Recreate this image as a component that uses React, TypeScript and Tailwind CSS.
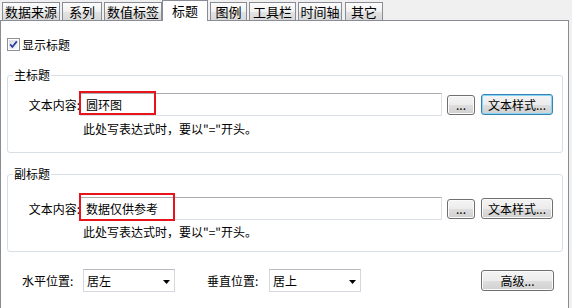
import React from "react";

const tabs = [
  { label: "数据来源", cls: "ml-[2px] w-[58px]" },
  { label: "系列", cls: "ml-[2px] w-[40px]" },
  { label: "数值标签", cls: "ml-[2px] w-[58px]" },
  { label: "标题", cls: "ml-0 w-[46px]", sel: true },
  { label: "图例", cls: "ml-[2px] w-[37px]" },
  { label: "工具栏", cls: "ml-[2px] w-[47px]" },
  { label: "时间轴", cls: "ml-[2px] w-[44px]" },
  { label: "其它", cls: "ml-[3px] w-[38px]" },
];

function Btn({ cls, focus, children }: { cls: string; focus?: boolean; children: React.ReactNode }) {
  return (
    <div
      className={
        "flex items-center justify-center rounded-[3px] border bg-[linear-gradient(to_bottom,#f4f4f4_0%,#ececec_50%,#dedede_51%,#d0d0d0_100%)] text-[12px] leading-[14px] text-black " +
        (focus
          ? "border-[#3c7fb1] shadow-[inset_0_0_0_1px_#7fd6f7]"
          : "border-[#707070] shadow-[inset_0_0_0_1px_#fbfbfb]") +
        " " +
        cls
      }
    >
      {children}
    </div>
  );
}

function Group({
  title,
  cls,
  value,
  redCls,
  padCls,
  hintCls,
  focus,
}: {
  title: string;
  cls: string;
  value: string;
  redCls: string;
  padCls: string;
  hintCls: string;
  focus?: boolean;
}) {
  return (
    <div className={"relative ml-[6px] h-[78px] w-[556px] rounded-[3px] border border-[#d5dfe5] " + cls}>
      <span className="absolute left-[5px] top-[-8px] bg-white px-[1px] text-[12px] leading-[14px]">{title}</span>
      <div className={"flex items-center " + padCls}>
        <div className="w-[72px] text-right text-[12px] leading-[14px]">文本内容:</div>
        <div className="relative flex h-[23px] w-[362px] items-center border border-[#dbdfe6] border-t-[#abadb3] bg-white pl-[5px] text-[12px] leading-[14px]">
          {value}
          <div className={"absolute border-2 border-[#e8141b] " + redCls}></div>
        </div>
        <Btn cls="ml-[5px] h-[20px] w-[28px] text-[#1c1c8c]">...</Btn>
        <Btn cls="ml-[6px] h-[21px] w-[72px]" focus={focus}>
          文本样式...
        </Btn>
      </div>
      <div className={"pl-[75px] text-[12px] leading-[14px] " + hintCls}>此处写表达式时，要以"="开头。</div>
    </div>
  );
}

function Select({ value }: { value: string }) {
  return (
    <div className="flex h-[23px] w-[92px] items-center justify-between border border-[#d4d8de] border-t-[#b9bcc2] bg-white pl-[3px] pr-[4px] text-[12px] leading-[14px]">
      <span>{value}</span>
      <svg width="7" height="4" viewBox="0 0 7 4" className="mt-[2px]">
        <path d="M0 0 H7 L3.5 4 Z" fill="#000" />
      </svg>
    </div>
  );
}

export default function App() {
  return (
    <div className="h-[308px] w-[572px] overflow-hidden bg-[#f0f0f0] font-['Noto_Sans_CJK_SC',sans-serif] text-[12px] text-black">
      <div className="relative z-10 flex h-[20px] items-end">
        {tabs.map((t) =>
          t.sel ? (
            <div
              key={t.label}
              className={
                "-mb-px flex h-[21px] items-center justify-center border border-b-0 border-[#898c95] bg-white text-[13px] leading-[14px] " +
                t.cls
              }
            >
              {t.label}
            </div>
          ) : (
            <div
              key={t.label}
              className={
                "flex h-[18px] items-center justify-center border border-b-0 border-[#898c95] bg-[linear-gradient(to_bottom,#fdfdfd_0%,#f0f0f0_50%,#e3e3e3_51%,#d9d9d9_100%)] text-[13px] leading-[14px] " +
                t.cls
              }
            >
              {t.label}
            </div>
          )
        )}
      </div>
      <div className="h-[290px] w-[569px] border border-[#898c95] bg-white">
        <div className="ml-[6px] mt-[17px] flex h-[13px] items-center">
          <svg width="13" height="13" viewBox="0 0 13 13">
            <defs>
              <linearGradient id="cb" x1="0" y1="0" x2="1" y2="1">
                <stop offset="0" stopColor="#d8dce6" />
                <stop offset="1" stopColor="#f8f8fb" />
              </linearGradient>
            </defs>
            <rect x="0.5" y="0.5" width="12" height="12" fill="#fff" stroke="#8e8f8f" />
            <rect x="2" y="2" width="9" height="9" fill="url(#cb)" />
            <path d="M3.2 6.4 L5.4 9 L9.8 3.4" fill="none" stroke="#2b3c9c" strokeWidth="1.7" />
          </svg>
          <span className="ml-[2px] text-[12px] leading-[14px]">显示标题</span>
        </div>
        <Group
          title="主标题"
          cls="mt-[24px]"
          value="圆环图"
          redCls="left-[-2px] top-[-3px] h-[24px] w-[77px]"
          padCls="pt-[17px]"
          hintCls="mt-[6px]"
          focus
        />
        <Group
          title="副标题"
          cls="mt-[21px]"
          value="数据仅供参考"
          redCls="left-[-2px] top-[-5px] h-[28px] w-[96px]"
          padCls="pt-[22px]"
          hintCls="mt-[5px]"
        />
        <div className="mt-[17px] flex items-center pl-[21px]">
          <div className="w-[61px] text-[12px] leading-[14px]">水平位置:</div>
          <Select value="居左" />
          <div className="ml-[32px] w-[62px] text-[12px] leading-[14px]">垂直位置:</div>
          <Select value="居上" />
          <Btn cls="ml-[120px] h-[21px] w-[73px]">高级...</Btn>
        </div>
      </div>
    </div>
  );
}
